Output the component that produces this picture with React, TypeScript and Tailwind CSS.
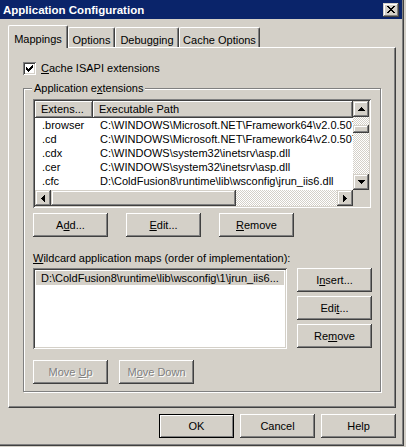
import React from "react";

function Pix({ rows, color = "#000000" }: { rows: string[]; color?: string }) {
  const w = rows[0].length;
  const h = rows.length;
  const rects: React.ReactElement[] = [];
  rows.forEach((r, y) => {
    for (let x = 0; x < w; x++) {
      if (r[x] === "x") rects.push(<rect key={`${x}-${y}`} x={x} y={y} width={1} height={1} fill={color} />);
    }
  });
  return (
    <svg width={w} height={h} viewBox={`0 0 ${w} ${h}`} shapeRendering="crispEdges" className="block">
      {rects}
    </svg>
  );
}

const UP = ["...x...", "..xxx..", ".xxxxx.", "xxxxxxx"];
const DOWN = ["xxxxxxx", ".xxxxx.", "..xxx..", "...x..."];
const LEFT = ["...x", "..xx", ".xxx", "xxxx", ".xxx", "..xx", "...x"];
const RIGHT = ["x...", "xx..", "xxx.", "xxxx", "xxx.", "xx..", "x..."];
const CLOSE = ["xx....xx", ".xx..xx.", "..xxxx..", "...xx...", "..xxxx..", ".xx..xx.", "xx....xx"];
const CHECK = ["......x", ".....xx", "x...xxx", "xx.xxx.", "xxxxx..", ".xxx...", "..x...."];

const bevel =
  "bg-[#d4d0c8] shadow-[inset_-1px_-1px_0_#404040,inset_1px_1px_0_#ffffff,inset_-2px_-2px_0_#808080]";
const bevelSmall =
  "bg-[#d4d0c8] shadow-[inset_-1px_-1px_0_#404040,inset_1px_1px_0_#d4d0c8,inset_-2px_-2px_0_#808080,inset_2px_2px_0_#ffffff]";
const sunken =
  "bg-white p-[2px] shadow-[inset_1px_1px_0_#808080,inset_-1px_-1px_0_#ffffff,inset_2px_2px_0_#404040,inset_-2px_-2px_0_#d4d0c8]";
const dither = "bg-[repeating-conic-gradient(#ffffff_0%_25%,#d4d0c8_0%_50%)] bg-size-[2px_2px]";

function U({ children }: { children: React.ReactNode }) {
  return <span className="underline decoration-1 underline-offset-[1px]">{children}</span>;
}

function Btn({
  children,
  def = false,
  disabled = false,
}: {
  children: React.ReactNode;
  def?: boolean;
  disabled?: boolean;
}) {
  return (
    <div
      className={`flex items-center justify-center w-[75px] h-[24px] shrink-0 ${
        def
          ? "bg-[#d4d0c8] border border-black shadow-[inset_1px_1px_0_#ffffff,inset_-1px_-1px_0_#808080]"
          : bevel
      } ${disabled ? "text-[#808080] [text-shadow:1px_1px_0_#ffffff]" : "text-black"}`}
    >
      <span className="whitespace-pre">{children}</span>
    </div>
  );
}

function ArrowBtn({ glyph }: { glyph: string[] }) {
  return (
    <div className={`w-[16px] h-[16px] shrink-0 flex items-center justify-center ${bevelSmall}`}>
      <Pix rows={glyph} />
    </div>
  );
}

const rows = [
  [".browser", "C:\\WINDOWS\\Microsoft.NET\\Framework64\\v2.0.50727\\aspnet_isapi.dll"],
  [".cd", "C:\\WINDOWS\\Microsoft.NET\\Framework64\\v2.0.50727\\aspnet_isapi.dll"],
  [".cdx", "C:\\WINDOWS\\system32\\inetsrv\\asp.dll"],
  [".cer", "C:\\WINDOWS\\system32\\inetsrv\\asp.dll"],
  [".cfc", "D:\\ColdFusion8\\runtime\\lib\\wsconfig\\jrun_iis6.dll"],
];

export default function App() {
  return (
    <div className="w-[406px] h-[447px] bg-[#d4d0c8] font-['Liberation_Sans',Arial,sans-serif] text-[11px] leading-[13px] text-black overflow-hidden">
      <div className="w-[404px] h-[446px] border-r border-b border-[#404040]">
        <div className="w-[403px] h-[445px] border-r border-b border-[#808080] flex flex-col">
          {/* Title bar */}
          <div className="h-[19px] shrink-0 bg-[#0a246a] flex items-center pl-[3px] pr-[3px]">
            <span className="flex-1 text-white font-bold text-[11.5px] leading-[13px] pt-[2px]">
              Application Configuration
            </span>
            <div className={`w-[16px] h-[14px] flex items-center justify-center ${bevelSmall}`}>
              <Pix rows={CLOSE} />
            </div>
          </div>

          {/* Tabs */}
          <div className="ml-[8px] mt-[6px] h-[22px] flex items-end">
            <div className="relative z-10 mb-[-1px] w-[60px] h-[23px] bg-[#d4d0c8] border-l border-t border-white border-r border-r-[#404040] rounded-t-[2px] shadow-[inset_-1px_0_0_#808080] flex justify-center pt-[7px]">
              Mappings
            </div>
            <div className="w-[47px] h-[20px] bg-[#d4d0c8] border-l border-t border-white border-r border-r-[#404040] rounded-t-[2px] shadow-[inset_-1px_0_0_#808080] flex justify-center pt-[6px]">
              Options
            </div>
            <div className="w-[64px] h-[20px] bg-[#d4d0c8] border-l border-t border-white border-r border-r-[#404040] rounded-t-[2px] shadow-[inset_-1px_0_0_#808080] flex justify-center pt-[6px]">
              Debugging
            </div>
            <div className="w-[81px] h-[20px] bg-[#d4d0c8] border-l border-t border-white border-r border-r-[#404040] rounded-t-[2px] shadow-[inset_-1px_0_0_#808080] flex justify-center pt-[6px]">
              Cache Options
            </div>
          </div>

          {/* Tab panel */}
          <div className="ml-[8px] w-[388px] h-[361px] shrink-0 border border-white border-r-[#404040] border-b-[#404040] shadow-[inset_-1px_-1px_0_#808080] pl-[14px] pt-[14px]">
            {/* Checkbox */}
            <div className="flex items-center h-[13px]">
              <div className="w-[13px] h-[13px] bg-white p-[3px] shadow-[inset_1px_1px_0_#808080,inset_-1px_-1px_0_#ffffff,inset_2px_2px_0_#404040,inset_-2px_-2px_0_#d4d0c8]">
                <Pix rows={CHECK} />
              </div>
              <span className="ml-[5px]">
                <U>C</U>ache ISAPI extensions
              </span>
            </div>

            {/* Group box */}
            <div className="relative mt-[13px] w-[358px] border border-[#808080] shadow-[inset_1px_1px_0_#ffffff,1px_1px_0_#ffffff] pl-[9px] pt-[10px] pb-[7px]">
              <div className="absolute left-[8px] top-[-7px] px-[2px] bg-[#d4d0c8] leading-[13px]">
                Application e<U>x</U>tensions
              </div>

              {/* List view */}
              <div className={`w-[338px] h-[109px] ${sunken}`}>
                <div className="grid grid-cols-[318px_16px] grid-rows-[89px_16px] w-[334px] h-[105px]">
                  <div className="overflow-hidden bg-white">
                    <div className="flex h-[17px]">
                      <div className={`w-[58px] shrink-0 pl-[6px] flex items-center ${bevel}`}>Extens...</div>
                      <div className={`flex-1 pl-[6px] flex items-center ${bevel}`}>Executable Path</div>
                    </div>
                    {rows.map(([ext, path]) => (
                      <div key={ext} className="flex h-[14px] leading-[14px] whitespace-nowrap">
                        <div className="w-[58px] shrink-0 pl-[7px]">{ext}</div>
                        <div className="pl-[7px]">{path}</div>
                      </div>
                    ))}
                  </div>
                  {/* vertical scrollbar */}
                  <div className="flex flex-col">
                    <ArrowBtn glyph={UP} />
                    <div className={`flex-1 ${dither}`}>
                      <div className={`mt-[8px] h-[8px] w-[16px] ${bevelSmall}`} />
                    </div>
                    <ArrowBtn glyph={DOWN} />
                  </div>
                  {/* horizontal scrollbar */}
                  <div className="flex">
                    <ArrowBtn glyph={LEFT} />
                    <div className={`w-[185px] h-[16px] shrink-0 ${bevelSmall}`} />
                    <div className={`flex-1 ${dither}`} />
                    <ArrowBtn glyph={RIGHT} />
                  </div>
                  <div className="bg-[#d4d0c8]" />
                </div>
              </div>

              {/* Add / Edit / Remove */}
              <div className="mt-[5px] flex gap-[18px]">
                <Btn>
                  A<U>d</U>d...
                </Btn>
                <Btn>
                  <U>E</U>dit...
                </Btn>
                <Btn>
                  <U>R</U>emove
                </Btn>
              </div>

              <div className="mt-[15px] h-[13px] leading-[13px]">
                <U>W</U>ildcard application maps (order of implementation):
              </div>

              <div className="mt-[3px] flex gap-[10px]">
                <div className={`w-[254px] h-[81px] shrink-0 ${sunken}`}>
                  <div className="mt-[1px] mx-[1px] h-[14px] leading-[14px] bg-[#d4d0c8] pl-[5px] whitespace-nowrap overflow-hidden">
                    D:\ColdFusion8\runtime\lib\wsconfig\1\jrun_iis6...
                  </div>
                </div>
                <div className="flex flex-col gap-[4px]">
                  <Btn>
                    I<U>n</U>sert...
                  </Btn>
                  <Btn>
                    Edi<U>t</U>...
                  </Btn>
                  <Btn>
                    Re<U>m</U>ove
                  </Btn>
                </div>
              </div>

              <div className="mt-[11px] flex gap-[11px]">
                <Btn disabled>
                  Move <U>U</U>p
                </Btn>
                <Btn disabled>
                  M<U>o</U>ve Down
                </Btn>
              </div>
            </div>
          </div>

          {/* Bottom buttons */}
          <div className="ml-[8px] w-[388px] mt-[6px] flex justify-end gap-[6px]">
            <Btn def>OK</Btn>
            <Btn>Cancel</Btn>
            <Btn>Help</Btn>
          </div>
        </div>
      </div>
    </div>
  );
}
